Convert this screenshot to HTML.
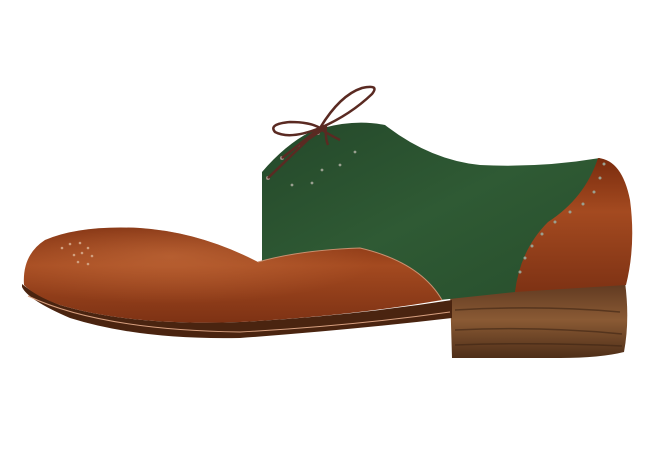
<!DOCTYPE html>
<html><head><style>html,body{margin:0;padding:0;background:#fff;width:660px;height:460px;overflow:hidden}</style></head>
<body>
<svg width="660" height="460" viewBox="0 0 660 460" xmlns="http://www.w3.org/2000/svg">
<defs>
<linearGradient id="br" x1="0" y1="0" x2="0" y2="1">
<stop offset="0" stop-color="#7a2c0e"/><stop offset="0.4" stop-color="#a44a20"/><stop offset="1" stop-color="#7e3214"/>
</linearGradient>
<linearGradient id="gr" x1="0" y1="0" x2="1" y2="1">
<stop offset="0" stop-color="#24482a"/><stop offset="0.5" stop-color="#2f5a34"/><stop offset="1" stop-color="#274e2c"/>
</linearGradient>
<linearGradient id="wd" x1="0" y1="0" x2="0" y2="1">
<stop offset="0" stop-color="#5e3820"/><stop offset="0.5" stop-color="#8a5a34"/><stop offset="1" stop-color="#4e2e18"/>
</linearGradient>
<radialGradient id="hl" cx="0.35" cy="0.3" r="0.5">
<stop offset="0" stop-color="#c8703e" stop-opacity="0.6"/><stop offset="1" stop-color="#c8703e" stop-opacity="0"/>
</radialGradient>
</defs>
<path d="M450 290 L625 282 Q630 320 624 352 Q600 358 560 358 L452 358 Z" fill="url(#wd)"/>
<path d="M455 310 Q540 305 620 312 M455 330 Q540 326 622 334 M455 345 Q540 342 622 346" stroke="#3e2414" stroke-width="1.5" fill="none" opacity="0.6"/>
<path d="M262 172 Q285 145 310 132 Q350 118 385 125 Q430 160 480 165 Q540 168 600 158 Q610 200 560 225 Q525 250 515 292 L440 300 Q420 265 360 248 Q300 250 262 262 Z" fill="url(#gr)"/>
<path d="M598 158 Q622 160 630 200 Q636 245 626 285 L515 292 Q520 250 548 222 Q585 198 598 158 Z" fill="url(#br)"/>
<path d="M22 287 Q28 300 70 318 Q140 340 240 338 Q350 330 452 318 L452 300 Q350 316 240 322 Q130 326 60 305 Q35 295 22 284 Z" fill="#4a2410"/>
<path d="M28 296 Q100 330 240 332 Q350 326 450 312" stroke="#d8a080" stroke-width="1" fill="none"/>
<path d="M24 285 Q22 255 45 240 Q80 225 140 228 Q200 232 258 262 Q300 250 360 248 Q420 262 442 300 Q350 316 240 322 Q130 326 60 305 Q35 296 24 285 Z" fill="url(#br)"/>
<path d="M24 285 Q22 255 45 240 Q80 225 140 228 Q200 232 258 262 Q300 250 360 248 Q420 262 442 300 Q350 316 240 322 Q130 326 60 305 Q35 296 24 285 Z" fill="url(#hl)"/>
<path d="M258 262 Q300 250 360 248 Q420 262 442 300" stroke="#c89070" stroke-width="1" fill="none"/>
<g fill="#d0a080">
<circle cx="62" cy="248" r="1.3"/><circle cx="70" cy="244" r="1.3"/><circle cx="80" cy="243" r="1.3"/><circle cx="88" cy="248" r="1.3"/><circle cx="92" cy="256" r="1.3"/><circle cx="88" cy="264" r="1.3"/><circle cx="78" cy="262" r="1.3"/><circle cx="74" cy="255" r="1.3"/><circle cx="82" cy="253" r="1.3"/>
</g>
<g fill="#9aa090">
<circle cx="520" cy="272" r="1.5"/><circle cx="525" cy="258" r="1.5"/><circle cx="532" cy="246" r="1.5"/><circle cx="542" cy="234" r="1.5"/><circle cx="555" cy="222" r="1.5"/><circle cx="570" cy="212" r="1.5"/><circle cx="583" cy="204" r="1.5"/><circle cx="594" cy="192" r="1.5"/><circle cx="600" cy="178" r="1.5"/><circle cx="604" cy="164" r="1.5"/>
<circle cx="292" cy="185" r="1.4"/><circle cx="312" cy="183" r="1.4"/><circle cx="322" cy="170" r="1.4"/><circle cx="340" cy="165" r="1.4"/><circle cx="355" cy="152" r="1.4"/>
</g>
<g fill="#9a8a80"><circle cx="268" cy="178" r="2"/><circle cx="282" cy="158" r="2"/><circle cx="300" cy="145" r="2"/><circle cx="318" cy="133" r="2"/></g>
<path d="M268 178 L320 128 M282 158 L320 128 M300 145 L322 130 M318 133 L326 126" stroke="#5a2a22" stroke-width="2.5" fill="none"/>
<path d="M320 128 Q290 140 275 132 Q268 124 290 122 Q310 122 320 128 Q350 115 372 94 Q380 84 362 88 Q340 95 320 128 M322 130 Q330 135 340 140 M326 126 Q325 138 328 145" stroke="#5a2a22" stroke-width="2.5" fill="none"/>
</svg>
</body></html>
